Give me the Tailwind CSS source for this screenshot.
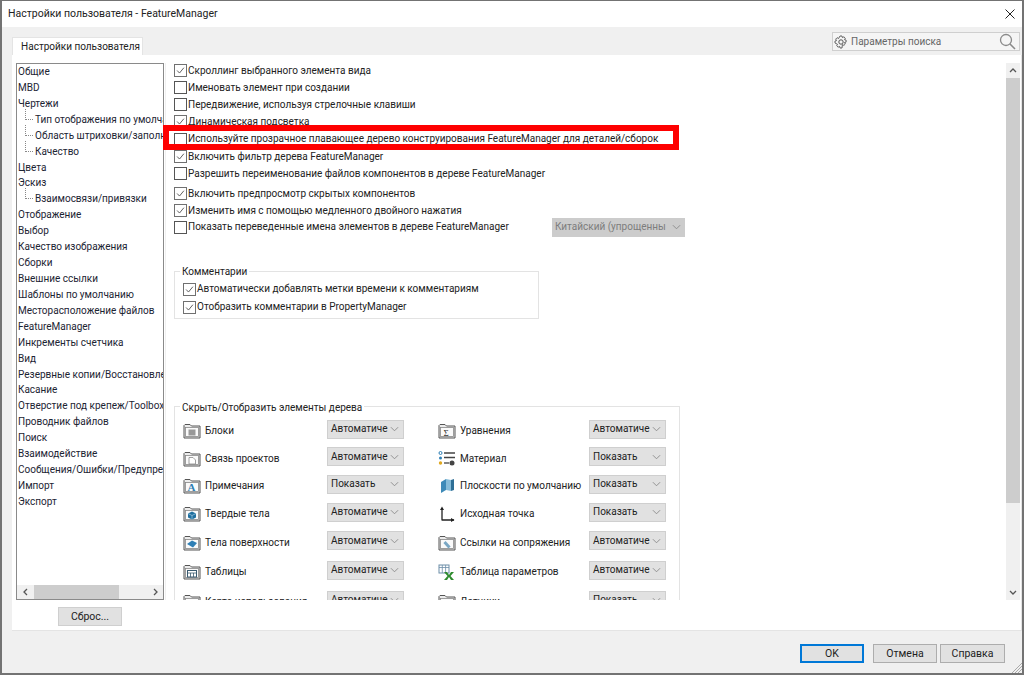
<!DOCTYPE html>
<html lang="ru">
<head>
<meta charset="UTF-8">
<title>Настройки пользователя - FeatureManager</title>
<script src="https://cdn.jsdelivr.net/npm/@tailwindcss/browser@4"></script>
</head>
<body class="w-[1024px] h-[675px] overflow-hidden font-['Roboto',sans-serif] text-[10px] leading-[16px] text-[#222] whitespace-nowrap">
<!-- shared icons -->
<svg class="hidden">
  <symbol id="check" viewBox="0 0 13 13"><path d="M2.500 6.500 5.300 9.500 10.500 3.200" fill="none" stroke="#555" stroke-width="1.100"/></symbol>
  <symbol id="chev" viewBox="0 0 10 6"><path d="M1 1 5 5 9 1" fill="none" stroke="#8a8a8a" stroke-width="1"/></symbol>
  <symbol id="folder" viewBox="0 0 18 16"><path d="M1 15V2.500L2 1.500h5l1.500 1.500H17V15z" fill="#ececec" stroke="#555"/><rect x="2.500" y="4.500" width="13" height="9" fill="#fafafa" stroke="#888" stroke-width=".8"/></symbol>
</svg>

<div class="w-full h-full flex flex-col border-2 border-t border-[#737373] bg-[#f0f0f0] relative">
  <!-- title bar -->
  <div class="h-[26px] shrink-0 bg-white flex items-center justify-between pl-[6px] pr-[7px] text-[10.5px]">
    <span>Настройки пользователя - FeatureManager</span>
    <svg class="w-[10px] h-[10px]" viewBox="0 0 10 10"><path d="M.5.5l9 9M9.500.5l-9 9" stroke="#222" fill="none"/></svg>
  </div>

  <!-- tab strip + search -->
  <div class="h-[28px] shrink-0 flex items-end justify-between pl-[10px] pr-[2px]">
    <div class="w-[131px] h-[18px] pl-[6px] bg-white border border-b-0 border-[#e4e4e4] flex items-center justify-center">Настройки пользователя</div>
    <div class="w-[188px] h-[19px] mb-[4px] bg-[#f5f5f5] border border-[#cfcfcf] flex items-center pl-[1px] pr-[3px] text-[#666]">
      <svg class="w-[14px] h-[14px]" viewBox="0 0 14 14"><circle cx="7" cy="7" r="2.200" fill="none" stroke="#555"/><path d="M6 1h2l.4 1.600 1.500-.8 1.400 1.400-.8 1.500 1.600.4v2l-1.600.4.8 1.500-1.400 1.400-1.500-.8L8 13H6l-.4-1.600-1.500.8-1.400-1.400.8-1.500L1 8V6l1.500-.4-.8-1.500 1.400-1.400 1.500.8z" fill="none" stroke="#555" stroke-width=".9"/></svg>
      <span class="ml-[3px] flex-1">Параметры поиска</span>
      <svg class="w-[17px] h-[17px]" viewBox="0 0 17 17"><circle cx="7" cy="7" r="5.500" fill="none" stroke="#8a8a8a" stroke-width="1.300"/><path d="M11 11l5 5" stroke="#8a8a8a" stroke-width="1.600"/></svg>
    </div>
  </div>

  <!-- main panel -->
  <div class="h-[576px] shrink-0 ml-[10px] bg-white border-b border-r border-[#e4e4e4] flex flex-col">
    <div class="flex h-[537px] mt-[8px] shrink-0">
      <!-- left column tree -->
      <div class="w-[148px] ml-[4px] shrink-0 flex flex-col border border-[#8a8a8a]">
        <div class="flex-1 overflow-hidden pl-[1px] text-[#1c2433]">
          <div class="h-[15.930px]">Общие</div>
          <div class="h-[15.930px]">MBD</div>
          <div class="h-[15.930px]">Чертежи</div>
          <div class="h-[15.930px] pl-[17px] relative"><span class="absolute left-[7px] -top-[3px] w-[8px] h-[11px] border-l border-b border-dotted border-[#888]"></span>Тип отображения по умолчанию</div>
          <div class="h-[15.930px] pl-[17px] relative"><span class="absolute left-[7px] -top-[3px] w-[8px] h-[11px] border-l border-b border-dotted border-[#888]"></span>Область штриховки/заполнения</div>
          <div class="h-[15.930px] pl-[17px] relative"><span class="absolute left-[7px] -top-[3px] w-[8px] h-[11px] border-l border-b border-dotted border-[#888]"></span>Качество</div>
          <div class="h-[15.930px]">Цвета</div>
          <div class="h-[15.930px]">Эскиз</div>
          <div class="h-[15.930px] pl-[17px] relative"><span class="absolute left-[7px] -top-[3px] w-[8px] h-[11px] border-l border-b border-dotted border-[#888]"></span>Взаимосвязи/привязки</div>
          <div class="h-[15.930px]">Отображение</div>
          <div class="h-[15.930px]">Выбор</div>
          <div class="h-[15.930px]">Качество изображения</div>
          <div class="h-[15.930px]">Сборки</div>
          <div class="h-[15.930px]">Внешние ссылки</div>
          <div class="h-[15.930px]">Шаблоны по умолчанию</div>
          <div class="h-[15.930px]">Месторасположение файлов</div>
          <div class="h-[15.930px]">FeatureManager</div>
          <div class="h-[15.930px]">Инкременты счетчика</div>
          <div class="h-[15.930px]">Вид</div>
          <div class="h-[15.930px]">Резервные копии/Восстановление</div>
          <div class="h-[15.930px]">Касание</div>
          <div class="h-[15.930px]">Отверстие под крепеж/Toolbox</div>
          <div class="h-[15.930px]">Проводник файлов</div>
          <div class="h-[15.930px]">Поиск</div>
          <div class="h-[15.930px]">Взаимодействие</div>
          <div class="h-[15.930px]">Сообщения/Ошибки/Предупреждения</div>
          <div class="h-[15.930px]">Импорт</div>
          <div class="h-[15.930px]">Экспорт</div>
        </div>
        <!-- horizontal scrollbar -->
        <div class="h-[14px] shrink-0 bg-[#f0f0f0] flex items-center">
          <div class="w-[17px] flex justify-center"><svg class="w-[5px] h-[8px]" viewBox="0 0 5 8"><path d="M4 1 1 4l3 3" fill="none" stroke="#555" stroke-width="1.300"/></svg></div>
          <div class="w-[85px] h-full bg-[#cdcdcd]"></div>
          <div class="flex-1 flex justify-end pr-[5px]"><svg class="w-[5px] h-[8px]" viewBox="0 0 5 8"><path d="M1 1l3 3-3 3" fill="none" stroke="#555" stroke-width="1.300"/></svg></div>
        </div>
      </div>

      <!-- right column options -->
      <div class="w-[841px] shrink-0 ml-[1px] pl-[8px] overflow-hidden border-l border-[#f0f0f0]">
        <div class="flex flex-col -mt-[1px]">
          <label class="h-[17px] flex items-center gap-[1px]"><svg class="w-[13px] h-[13px] border border-[#707070]"><use href="#check"/></svg><span>Скроллинг выбранного элемента вида</span></label>
          <label class="h-[17px] flex items-center gap-[1px]"><span class="w-[13px] h-[13px] border border-[#555]"></span><span>Именовать элемент при создании</span></label>
          <label class="h-[17px] flex items-center gap-[1px]"><span class="w-[13px] h-[13px] border border-[#555]"></span><span>Передвижение, используя стрелочные клавиши</span></label>
          <label class="h-[17px] flex items-center gap-[1px]"><svg class="w-[13px] h-[13px] border border-[#707070]"><use href="#check"/></svg><span>Динамическая подсветка</span></label>
          <label class="h-[18px] flex items-center gap-[1px]"><span class="w-[13px] h-[13px] border border-[#555]"></span><span>Используйте прозрачное плавающее дерево конструирования FeatureManager для деталей/сборок</span></label>
          <label class="h-[17px] flex items-center gap-[1px]"><svg class="w-[13px] h-[13px] border border-[#707070]"><use href="#check"/></svg><span>Включить фильтр дерева FeatureManager</span></label>
          <label class="h-[17px] flex items-center gap-[1px]"><span class="w-[13px] h-[13px] border border-[#555]"></span><span>Разрешить переименование файлов компонентов в дереве FeatureManager</span></label>
          <label class="h-[17px] mt-[3px] flex items-center gap-[1px]"><svg class="w-[13px] h-[13px] border border-[#707070]"><use href="#check"/></svg><span>Включить предпросмотр скрытых компонентов</span></label>
          <label class="h-[17px] flex items-center gap-[1px]"><svg class="w-[13px] h-[13px] border border-[#707070]"><use href="#check"/></svg><span>Изменить имя с помощью медленного двойного нажатия</span></label>
          <div class="h-[16px] flex items-center">
            <label class="w-[378px] flex items-center gap-[1px]"><span class="w-[13px] h-[13px] border border-[#555]"></span><span>Показать переведенные имена элементов в дереве FeatureManager</span></label>
            <div class="w-[133px] h-[19px] shrink-0 bg-[#cccccc] flex items-center justify-between pl-[3px] pr-[4px] text-[#7d7d7d]"><span>Китайский (упрощенны</span><svg class="w-[9px] h-[6px]"><use href="#chev"/></svg></div>
          </div>
        </div>

        <!-- comments group -->
        <div class="relative w-[365px] h-[48px] mt-[36px] border border-[#e3e3e3] pt-[8px] pl-[8px]">
          <span class="absolute left-[5px] -top-[8px] bg-white px-[2px]">Комментарии</span>
          <label class="h-[18px] flex items-center gap-[1px]"><svg class="w-[13px] h-[13px] border border-[#707070]"><use href="#check"/></svg><span>Автоматически добавлять метки времени к комментариям</span></label>
          <label class="h-[18px] flex items-center gap-[1px]"><svg class="w-[13px] h-[13px] border border-[#707070]"><use href="#check"/></svg><span>Отобразить комментарии в PropertyManager</span></label>
        </div>

        <!-- tree items group -->
        <div class="relative w-[506px] h-[230px] mt-[87px] border border-[#e3e3e3] pt-[8px] pl-[8px]">
          <span class="absolute left-[5px] -top-[7px] bg-white px-[2px]">Скрыть/Отобразить элементы дерева</span>
          <div class="grid grid-cols-[255px_auto] grid-rows-[28px_27px_28px_28px_29px_30px_30px]">
            <div class="flex items-center">
              <span class="w-[144px] mt-[4px] flex items-center gap-[4px]"><svg class="w-[18px] h-[16px]" viewBox="0 0 18 16"><use href="#folder"/><rect x="5.500" y="6.500" width="7" height="6" fill="#999"/></svg>Блоки</span>
              <div class="w-[77px] h-[19px] bg-[#e1e1e1] border border-[#cfcfcf] flex items-center justify-between pl-[3px] pr-[4px]"><span>Автоматиче</span><svg class="w-[9px] h-[6px]"><use href="#chev"/></svg></div>
            </div>
            <div class="flex items-center">
              <span class="w-[151px] mt-[4px] flex items-center gap-[4px]"><svg class="w-[18px] h-[16px]" viewBox="0 0 18 16"><use href="#folder"/><text x="5.500" y="12.500" font-size="9" font-family="Liberation Serif" fill="#333">Σ</text></svg>Уравнения</span>
              <div class="w-[77px] h-[19px] bg-[#e1e1e1] border border-[#cfcfcf] flex items-center justify-between pl-[3px] pr-[4px]"><span>Автоматиче</span><svg class="w-[9px] h-[6px]"><use href="#chev"/></svg></div>
            </div>
            <div class="flex items-center">
              <span class="w-[144px] mt-[4px] flex items-center gap-[4px]"><svg class="w-[18px] h-[16px]" viewBox="0 0 18 16"><use href="#folder"/><path d="M6 6.500h4l2.500 2.500v4H6z" fill="#fff" stroke="#888" stroke-width=".8"/></svg>Связь проектов</span>
              <div class="w-[77px] h-[19px] bg-[#e1e1e1] border border-[#cfcfcf] flex items-center justify-between pl-[3px] pr-[4px]"><span>Автоматиче</span><svg class="w-[9px] h-[6px]"><use href="#chev"/></svg></div>
            </div>
            <div class="flex items-center">
              <span class="w-[151px] mt-[4px] flex items-center gap-[4px]"><svg class="w-[18px] h-[16px]" viewBox="0 0 18 16"><circle cx="2.500" cy="2" r="1.500" fill="none" stroke="#2f7fb5"/><path d="M6 2h11M6 6.500h11" stroke="#444" stroke-width="1.300"/><circle cx="2.500" cy="7" r="1.500" fill="#2f7fb5"/><circle cx="2.500" cy="12" r="1.700" fill="#e0a820"/><path d="M6 12h5" stroke="#444" stroke-width="1.300"/><circle cx="14" cy="12" r="2.500" fill="#444"/></svg>Материал</span>
              <div class="w-[77px] h-[19px] bg-[#e1e1e1] border border-[#cfcfcf] flex items-center justify-between pl-[3px] pr-[4px]"><span>Показать</span><svg class="w-[9px] h-[6px]"><use href="#chev"/></svg></div>
            </div>
            <div class="flex items-center">
              <span class="w-[144px] mt-[4px] flex items-center gap-[4px]"><svg class="w-[18px] h-[16px]" viewBox="0 0 18 16"><use href="#folder"/><text x="4.500" y="13" font-size="11" font-weight="bold" font-family="Liberation Serif" fill="#2f7fb5">A</text></svg>Примечания</span>
              <div class="w-[77px] h-[19px] bg-[#e1e1e1] border border-[#cfcfcf] flex items-center justify-between pl-[3px] pr-[4px]"><span>Показать</span><svg class="w-[9px] h-[6px]"><use href="#chev"/></svg></div>
            </div>
            <div class="flex items-center">
              <span class="w-[151px] mt-[4px] flex items-center gap-[4px]"><svg class="w-[18px] h-[16px]" viewBox="0 0 18 16"><path d="M3 4l5-3v11l-5 3z" fill="#3d8ab8"/><path d="M8 1l5 1v11l-5-1z" fill="#86bcd9"/><path d="M13 2l3-1v11l-3 1z" fill="#2e6f96"/></svg>Плоскости по умолчанию</span>
              <div class="w-[77px] h-[19px] bg-[#e1e1e1] border border-[#cfcfcf] flex items-center justify-between pl-[3px] pr-[4px]"><span>Показать</span><svg class="w-[9px] h-[6px]"><use href="#chev"/></svg></div>
            </div>
            <div class="flex items-center">
              <span class="w-[144px] mt-[4px] flex items-center gap-[4px]"><svg class="w-[18px] h-[16px]" viewBox="0 0 18 16"><use href="#folder"/><path d="M9 5.500l4 2v4l-4 2-4-2v-4z" fill="#1f6f9f"/><path d="M5 7.500l4 2 4-2M9 9.500v4" fill="none" stroke="#bcdcef" stroke-width=".6"/></svg>Твердые тела</span>
              <div class="w-[77px] h-[19px] bg-[#e1e1e1] border border-[#cfcfcf] flex items-center justify-between pl-[3px] pr-[4px]"><span>Автоматиче</span><svg class="w-[9px] h-[6px]"><use href="#chev"/></svg></div>
            </div>
            <div class="flex items-center">
              <span class="w-[151px] mt-[4px] flex items-center gap-[4px]"><svg class="w-[18px] h-[16px]" viewBox="0 0 18 16"><path d="M4 2v12.500M4 14h12" stroke="#222" stroke-width="1.300" fill="none"/><path d="M2 4l2-3.500 2 3.500zM13 12l3.500 2-3.500 2z" fill="#222"/></svg>Исходная точка</span>
              <div class="w-[77px] h-[19px] bg-[#e1e1e1] border border-[#cfcfcf] flex items-center justify-between pl-[3px] pr-[4px]"><span>Показать</span><svg class="w-[9px] h-[6px]"><use href="#chev"/></svg></div>
            </div>
            <div class="flex items-center">
              <span class="w-[144px] mt-[4px] flex items-center gap-[4px]"><svg class="w-[18px] h-[16px]" viewBox="0 0 18 16"><use href="#folder"/><path d="M4 9l5-3.500 5 2.500-4 4.500z" fill="#2f7fb5"/></svg>Тела поверхности</span>
              <div class="w-[77px] h-[19px] bg-[#e1e1e1] border border-[#cfcfcf] flex items-center justify-between pl-[3px] pr-[4px]"><span>Автоматиче</span><svg class="w-[9px] h-[6px]"><use href="#chev"/></svg></div>
            </div>
            <div class="flex items-center">
              <span class="w-[151px] mt-[4px] flex items-center gap-[4px]"><svg class="w-[18px] h-[16px]" viewBox="0 0 18 16"><use href="#folder"/><path d="M6.500 7l5 5.500" stroke="#7aa7c4" stroke-width="3"/></svg>Ссылки на сопряжения</span>
              <div class="w-[77px] h-[19px] bg-[#e1e1e1] border border-[#cfcfcf] flex items-center justify-between pl-[3px] pr-[4px]"><span>Автоматиче</span><svg class="w-[9px] h-[6px]"><use href="#chev"/></svg></div>
            </div>
            <div class="flex items-center">
              <span class="w-[144px] mt-[4px] flex items-center gap-[4px]"><svg class="w-[18px] h-[16px]" viewBox="0 0 18 16"><use href="#folder"/><rect x="4.500" y="6.500" width="9" height="6.500" fill="#fff" stroke="#3a5a70"/><path d="M4.500 9h9M7.500 9v4M10.500 9v4" stroke="#3a5a70" stroke-width=".8"/></svg>Таблицы</span>
              <div class="w-[77px] h-[19px] bg-[#e1e1e1] border border-[#cfcfcf] flex items-center justify-between pl-[3px] pr-[4px]"><span>Автоматиче</span><svg class="w-[9px] h-[6px]"><use href="#chev"/></svg></div>
            </div>
            <div class="flex items-center">
              <span class="w-[151px] mt-[4px] flex items-center gap-[4px]"><svg class="w-[18px] h-[16px]" viewBox="0 0 18 16"><rect x="1" y="1" width="10" height="8" fill="#fff" stroke="#6d8ea8"/><path d="M1 3.500h10M4.300 1v8M7.600 1v8" stroke="#6d8ea8" stroke-width=".8"/><path d="M6 8h3l2 3 2-3h3l-3.500 4L16 16h-3l-2-3-2 3H6l3.500-4z" fill="#2e8b2e"/></svg>Таблица параметров</span>
              <div class="w-[77px] h-[19px] bg-[#e1e1e1] border border-[#cfcfcf] flex items-center justify-between pl-[3px] pr-[4px]"><span>Автоматиче</span><svg class="w-[9px] h-[6px]"><use href="#chev"/></svg></div>
            </div>
            <div class="flex items-center">
              <span class="w-[144px] mt-[4px] flex items-center gap-[4px]"><svg class="w-[18px] h-[16px]" viewBox="0 0 18 16"><use href="#folder"/></svg>Карта использования</span>
              <div class="w-[77px] h-[19px] bg-[#e1e1e1] border border-[#cfcfcf] flex items-center justify-between pl-[3px] pr-[4px]"><span>Автоматиче</span><svg class="w-[9px] h-[6px]"><use href="#chev"/></svg></div>
            </div>
            <div class="flex items-center">
              <span class="w-[151px] mt-[4px] flex items-center gap-[4px]"><svg class="w-[18px] h-[16px]" viewBox="0 0 18 16"><use href="#folder"/></svg>Датчики</span>
              <div class="w-[77px] h-[19px] bg-[#e1e1e1] border border-[#cfcfcf] flex items-center justify-between pl-[3px] pr-[4px]"><span>Показать</span><svg class="w-[9px] h-[6px]"><use href="#chev"/></svg></div>
            </div>
          </div>
        </div>
      </div>

      <!-- vertical scrollbar -->
      <div class="w-[14px] shrink-0 bg-[#f0f0f0] flex flex-col">
        <div class="h-[15px] flex items-center justify-center"><svg class="w-[8px] h-[5px]" viewBox="0 0 8 5"><path d="M1 4l3-3 3 3" fill="none" stroke="#555" stroke-width="1.300"/></svg></div>
        <div class="h-[425px] bg-[#cdcdcd]"></div>
        <div class="flex-1 flex items-end justify-center pb-[5px]"><svg class="w-[8px] h-[5px]" viewBox="0 0 8 5"><path d="M1 1l3 3 3-3" fill="none" stroke="#555" stroke-width="1.300"/></svg></div>
      </div>
    </div>

    <!-- reset -->
    <div class="ml-[46px] mt-[7px] w-[64px] h-[19px] text-[10.5px] bg-[#e1e1e1] border border-[#cfcfcf] flex items-center justify-center">Сброс...</div>
  </div>

  <!-- footer buttons -->
  <div class="flex-1 flex items-start justify-end pt-[13px] pr-[17px] text-[10.5px]">
    <div class="w-[64px] h-[19px] bg-[#e1e1e1] border-2 border-[#0078d7] flex items-center justify-center">OK</div>
    <div class="w-[64px] h-[19px] ml-[9px] bg-[#e1e1e1] border border-[#adadad] flex items-center justify-center">Отмена</div>
    <div class="w-[65px] h-[19px] ml-[3px] bg-[#e1e1e1] border border-[#adadad] flex items-center justify-center">Справка</div>
  </div>
  <svg class="absolute right-0 bottom-0 w-[12px] h-[12px]" viewBox="0 0 12 12"><path d="M12 2 2 12M12 5 5 12M12 8 8 12" stroke="#aaa"/></svg>

  <!-- red highlight drawn on top of the screenshot -->
  <div class="absolute left-[161px] top-[124px] w-[516px] h-[25px] border-[6px] border-[#fe0000]"></div>
</div>
</body>
</html>
